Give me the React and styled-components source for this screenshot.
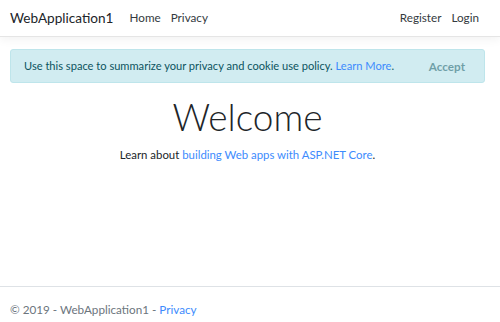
import React from 'react';
import styled, { createGlobalStyle } from 'styled-components';

const GlobalStyle = createGlobalStyle`
	html, body {
		margin: 0;
		padding: 0;
	}
	body {
		font-family: "Lato", "Open Sans", sans-serif;
		font-size: 11.7px;
		line-height: 1.5;
		color: #212529;
		background: #fff;
	}
	a {
		text-decoration: none;
	}
`

const App = () => {
	return (
		<Page>
			<GlobalStyle />
			<Navbar>
				<Brand href="#">WebApplication1</Brand>
				<NavList>
					<NavLink href="#">Home</NavLink>
					<NavLink href="#">Privacy</NavLink>
				</NavList>
				<NavList right>
					<NavLink href="#">Register</NavLink>
					<NavLink href="#">Login</NavLink>
				</NavList>
			</Navbar>
			<Main>
				<Alert>
					<span>
						Use this space to summarize your privacy and cookie use policy.{' '}
						<Link href="#">Learn More</Link>.
					</span>
					<AcceptButton type="button">Accept</AcceptButton>
				</Alert>
				<Hero>
					<Title>Welcome</Title>
					<Lead>
						Learn about <Link href="#">building Web apps with ASP.NET Core</Link>.
					</Lead>
				</Hero>
			</Main>
			<Footer>
				&copy; 2019 - WebApplication1 - <Link href="#">Privacy</Link>
			</Footer>
		</Page>
	)
}

export default App

const Page = styled.div`
	display: flex;
	flex-direction: column;
	min-height: 100vh;
`
const Navbar = styled.nav`
	display: flex;
	align-items: center;
	height: 36px;
	padding: 0 21px 0 10px;
	border-bottom: 1px solid #e5e5e5;
	box-shadow: 0 3px 9px rgba(0, 0, 0, .05);
`
const Brand = styled.a`
	font-size: 13.6px;
	color: #212529;
	margin-right: 16px;
`
const NavList = styled.div`
	display: flex;
	gap: 10px;
	margin-left: ${p => (p.right ? 'auto' : '0')};
`
const NavLink = styled.a`
	color: #343a40;
	font-size: 11.7px;
`
const Main = styled.main`
	padding: 12px 15px 0 10px;
`
const Alert = styled.div`
	display: flex;
	align-items: center;
	justify-content: space-between;
	height: 32px;
	padding: 0 19px 0 13px;
	background: #d1ecf1;
	border: 1px solid #bee5eb;
	border-radius: 3px;
	color: #0c5460;
	font-size: 11.1px;
`
const Link = styled.a`
	color: #3d8bfd;
`
const AcceptButton = styled.button`
	border: 0;
	background: none;
	padding: 0;
	font-family: inherit;
	font-size: 11.7px;
	font-weight: 700;
	color: #0c5460;
	opacity: .5;
	cursor: pointer;
`
const Hero = styled.div`
	text-align: center;
	margin-top: 12px;
`
const Title = styled.h1`
	font-size: 37px;
	font-weight: 300;
	line-height: 1.2;
	margin: 0 0 7px 0;
`
const Lead = styled.p`
	margin: 0;
	font-size: 11.4px;
`
const Footer = styled.footer`
	margin-top: auto;
	height: 25px;
	line-height: 24px;
	padding: 10px 10px 0;
	border-top: 1px solid #dee2e6;
	color: #6c757d;
`
